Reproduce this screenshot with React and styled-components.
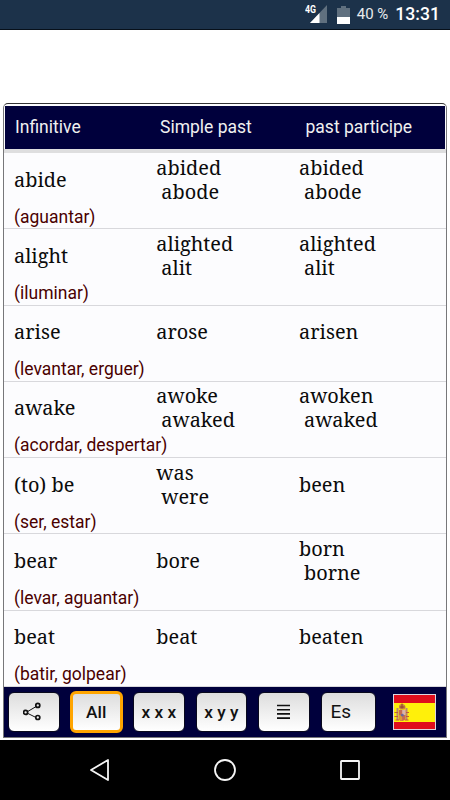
import React from 'react'
import styled, { createGlobalStyle } from 'styled-components'

const verbs = [
    { infinitive: 'abide', past: ['abided', 'abode'], participle: ['abided', 'abode'], translation: '(aguantar)' },
    { infinitive: 'alight', past: ['alighted', 'alit'], participle: ['alighted', 'alit'], translation: '(iluminar)' },
    { infinitive: 'arise', past: ['arose'], participle: ['arisen'], translation: '(levantar, erguer)' },
    { infinitive: 'awake', past: ['awoke', 'awaked'], participle: ['awoken', 'awaked'], translation: '(acordar, despertar)' },
    { infinitive: '(to) be', past: ['was', 'were'], participle: ['been'], translation: '(ser, estar)' },
    { infinitive: 'bear', past: ['bore'], participle: ['born', 'borne'], translation: '(levar, aguantar)' },
    { infinitive: 'beat', past: ['beat'], participle: ['beaten'], translation: '(batir, golpear)' }
]

function Forms ({ forms }) {
    return (
        <FormCell>
            {forms.map((form, i) => <Form key={form} $indent={i > 0}>{form}</Form>)}
        </FormCell>
    )
}

function StatusBar () {
    return (
        <Status>
            <svg width="23" height="20" viewBox="0 0 23 20">
                <path d="M22 1V19H5Z" fill="#60707f" />
                <path d="M14.5 9V19H5Z" fill="#fff" />
                <text x="0" y="9" fill="#fff" fontFamily="Roboto" fontWeight="700" fontSize="10" textLength="11" lengthAdjust="spacingAndGlyphs">4G</text>
            </svg>
            <Battery width="13" height="18" viewBox="0 0 13 18">
                <path d="M0 2H4V0H9V2H13V11H0Z" fill="#60707f" />
                <path d="M0 11H13V18H0Z" fill="#fff" />
            </Battery>
            <Percent>40 %</Percent>
            <Clock>13:31</Clock>
        </Status>
    )
}

function ShareIcon () {
    return (
        <svg width="22" height="20" viewBox="1 0 22 20" fill="none" stroke="#111">
            <path d="M4 10.5L15 4M4 10.5L15 16" strokeWidth="1" />
            <circle cx="3.6" cy="10.4" r="2" strokeWidth="1.7" fill="#eee" />
            <circle cx="15.8" cy="3.4" r="2" strokeWidth="1.7" fill="#e6e6e6" />
            <circle cx="15.8" cy="15.5" r="2" strokeWidth="1.7" fill="#f2f2f2" />
        </svg>
    )
}

function ListIcon () {
    return (
        <svg width="13" height="16" viewBox="0 0 13 16">
            <path d="M0 1.5H13M0 5.7H13M0 9.9H13M0 14.1H13" stroke="#111" strokeWidth="1.6" />
        </svg>
    )
}

function SpanishFlag () {
    return (
        <svg width="43" height="36" viewBox="0 0 43 36">
            <rect width="43" height="36" fill="#ddd6df" />
            <rect x="1" y="1" width="41" height="34" fill="#e00d1c" />
            <rect x="1" y="9" width="41" height="19" fill="#fff00a" />
            <path d="M3.5 14H5.5V26H3.5ZM12.5 14H14.5V26H12.5Z" fill="#b98575" />
            <path d="M1.5 18.5H5M1.5 22.5H5M13 18.5H16M13 22.5H16M2.5 26H6M12 26H15.5" stroke="#c45a39" strokeWidth="1.2" />
            <path d="M6 13.5Q5.5 10 9 10T12.5 13.5L11.5 15.5H7Z" fill="#c88540" />
            <path d="M7 13H11.5M9 9.5V14.5" stroke="#923d2e" strokeWidth="1" />
            <path d="M6 16H12.5V23.5Q12.5 26.5 9.2 27T6 23.5Z" fill="#c66a54" />
            <path d="M9.2 16H12.5V21H9.2Z" fill="#d9b5a9" />
            <path d="M6 21H9.2V27Q6 26 6 23.5Z" fill="#dc9b31" />
            <circle cx="9.3" cy="21.2" r="1.4" fill="#6a66a0" />
        </svg>
    )
}

export default function App () {
    return (
        <Screen>
            <GlobalStyle />
            <StatusBar />
            <AdSpace />
            <Panel>
                <Header>
                    <span>Infinitive</span>
                    <span>Simple past</span>
                    <span>past participe</span>
                </Header>
                <List>
                    {verbs.map(verb =>
                        <Row key={verb.infinitive}>
                            <Columns>
                                <FormCell><Form>{verb.infinitive}</Form></FormCell>
                                <Forms forms={verb.past} />
                                <Forms forms={verb.participle} />
                            </Columns>
                            <Translation>{verb.translation}</Translation>
                        </Row>
                    )}
                </List>
                <Toolbar>
                    <Button><ShareIcon /></Button>
                    <Button $active>All</Button>
                    <Button>x x x</Button>
                    <Button>x y y</Button>
                    <Button><ListIcon /></Button>
                    <Language>Es</Language>
                    <SpanishFlag />
                </Toolbar>
            </Panel>
            <NavBar>
                <svg width="22" height="24" viewBox="0 0 22 24">
                    <path d="M19 2V22L2 12Z" />
                </svg>
                <svg width="24" height="24" viewBox="0 0 24 24">
                    <circle cx="12" cy="12" r="10" />
                </svg>
                <svg width="22" height="22" viewBox="0 0 22 22">
                    <rect x="2" y="2" width="18" height="18" rx="0.5" />
                </svg>
            </NavBar>
        </Screen>
    )
}

const GlobalStyle = createGlobalStyle`
    * {
        box-sizing: border-box;
    }

    body {
        margin: 0;
        background: #ffffff;
    }

    svg {
        display: block;
        flex-shrink: 0;
    }
`

const Screen = styled.div`
    width: 450px;
    height: 800px;
    display: flex;
    flex-direction: column;
    overflow: hidden;
    font-family: Roboto, sans-serif;
`

const Status = styled.div`
    height: 30px;
    flex-shrink: 0;
    padding: 0 10px 1px 0;
    display: flex;
    align-items: center;
    justify-content: flex-end;
    background: #1c324a;
    border-bottom: 1px solid #07101a;
    color: #ffffff;
`

const Battery = styled.svg`
    margin-left: 9px;
    margin-top: 2px;
`

const Percent = styled.div`
    margin-left: 7px;
    font-size: 15px;
    color: #e8ebed;
`

const Clock = styled.div`
    margin-left: 7px;
    margin-top: -1px;
    font-size: 17.6px;
    font-weight: 500;
`

const AdSpace = styled.div`
    height: 73px;
    flex-shrink: 0;
`

const Panel = styled.div`
    height: 635px;
    flex-shrink: 0;
    margin: 0 3px 2px 3px;
    padding-top: 2px;
    display: flex;
    flex-direction: column;
    border: 1px solid #77777a;
    border-top-color: #333333;
    border-radius: 5px 5px 0 0;
    background: #fcfcfe;
`

const Header = styled.div`
    height: 43px;
    flex-shrink: 0;
    margin: 0 1px;
    padding: 0 0 2px 10px;
    display: grid;
    grid-template-columns: 145px 145.5px 1fr;
    align-items: center;
    background: #00003c;
    color: #f0f0f0;
    font-size: 17.5px;
`

const List = styled.div`
    flex: 1;
    min-height: 0;
    overflow: hidden;
    border-top: 4px solid #dededf;
`

const Row = styled.div`
    height: 76.25px;
    padding: 2.5px 0 0 10px;
    border-bottom: 1px solid #d8d8dc;
`

const Columns = styled.div`
    height: 48px;
    display: grid;
    grid-template-columns: 142.3px 142.7px 1fr;
    align-items: center;
`

const FormCell = styled.div`
    font-family: 'Noto Serif', 'DejaVu Serif Condensed', 'DejaVu Serif', serif;
    font-stretch: condensed;
    font-size: 19.9px;
    line-height: 24px;
    color: #0b0b0b;
`

const Form = styled.div`
    padding-left: ${props => props.$indent ? '5px' : '0'};
`

const Translation = styled.div`
    margin-top: 2px;
    font-size: 17.5px;
    line-height: 22px;
    color: #4a0000;
`

const Toolbar = styled.div`
    height: 50px;
    flex-shrink: 0;
    padding: 0 10px 0 4px;
    display: flex;
    align-items: center;
    gap: 11px;
    background: #00003c;

    > :last-child {
        margin-left: auto;
    }
`

const Button = styled.div`
    width: ${props => props.$active ? '53px' : '51.5px'};
    height: ${props => props.$active ? '42px' : '40px'};
    margin: ${props => props.$active ? '0 -0.75px' : '0'};
    padding-bottom: 1px;
    flex-shrink: 0;
    display: flex;
    align-items: center;
    justify-content: center;
    border: ${props => props.$active ? '3px solid #ffa500' : '1px solid #08081c'};
    border-radius: 6px;
    background: linear-gradient(#dddddd, #ffffff);
    color: #111111;
    font-size: 17.3px;
    font-weight: 500;
`

const Language = styled(Button)`
    width: 55px;
    padding-left: 9px;
    justify-content: flex-start;
    font-size: 19px;
    font-weight: 400;
`

const NavBar = styled.div`
    flex: 1;
    padding: 0 89px 0 89px;
    display: flex;
    align-items: center;
    justify-content: space-between;
    background: #000000;

    svg {
        fill: none;
        stroke: #f5f5f5;
        stroke-width: 1.8;
        stroke-linejoin: round;
    }
`
